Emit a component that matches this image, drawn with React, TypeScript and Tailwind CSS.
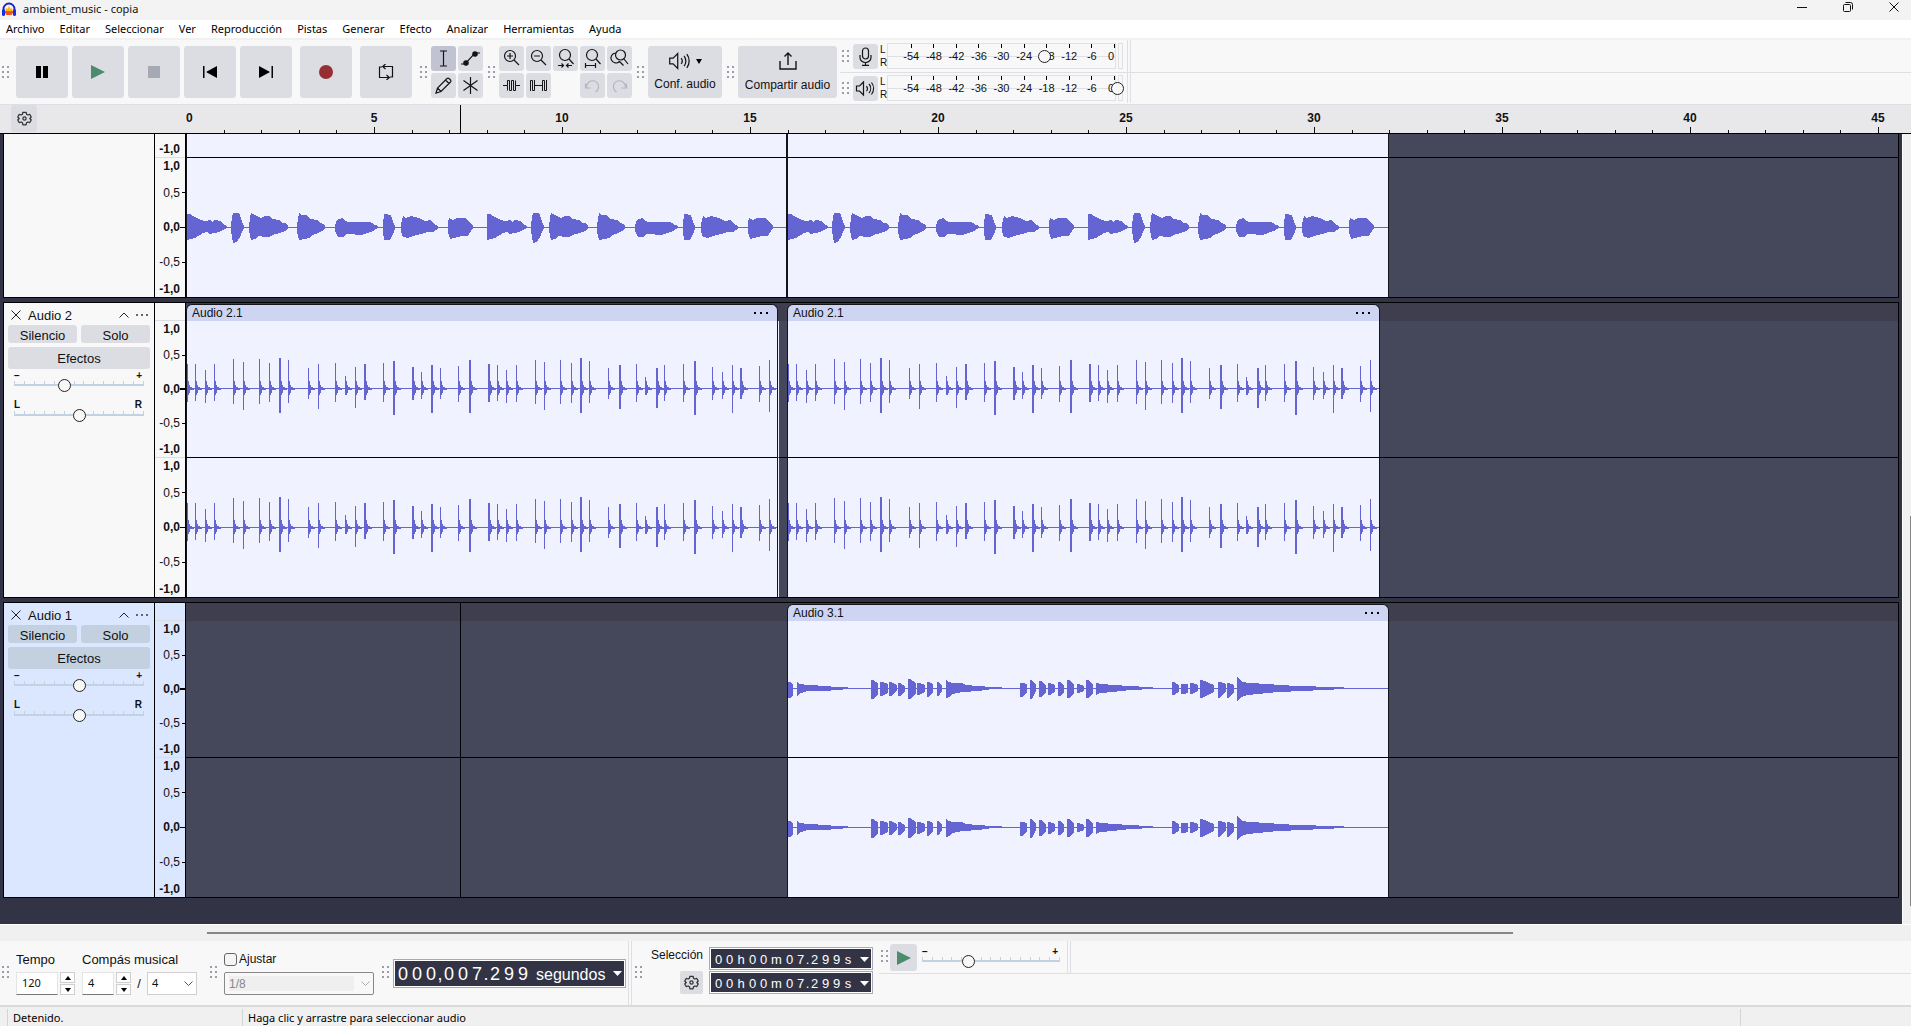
import React from 'react';

const MENU = ['Archivo', 'Editar', 'Seleccionar', 'Ver', 'Reproducción', 'Pistas', 'Generar', 'Efecto', 'Analizar', 'Herramientas', 'Ayuda'];

const SECONDS = [5, 10, 15, 20, 25, 30, 35, 40, 45];

const METER_MARKS = ['-54', '-48', '-42', '-36', '-30', '-24', '-18', '-12', '-6'];

// One bar of the pad sound, as outlines around the zero line
const PAD_NOTES = [
  '0,-13 3,-13 6,-11 10,-9 14,-7 18,-6 23,-7 25,-5 28,-7 33,-6 36,-3 40,-1 40,1 36,3 32,5 27,6 23,7 20,5 15,6 13,8 8,11 3,12 0,13',
  '44,-2 45,-10 46,-14 51,-14 53,-12 55,-5 57,-1 57,1 55,5 53,10 50,15 46,16 45,9 44,5',
  '62,-2 64,-15 65,-13 68,-12 74,-9 78,-11 82,-11 85,-8 92,-7 95,-4 99,-4 101,-1 101,2 98,4 93,6 88,7 82,10 79,10 71,9 68,12 64,13 62,4',
  '110,-2 112,-14 115,-12 120,-12 123,-8 130,-7 134,-4 136,-3 138,-1 138,1 135,4 131,6 126,8 122,11 117,12 112,13 110,5',
  '148,-2 150,-7 155,-9 158,-6 162,-5 182,-5 185,-4 188,-2 191,-1 191,1 186,4 180,6 175,8 160,7 156,10 151,10 148,4',
  '196,-3 197,-13 204,-12 206,-5 208,-1 208,2 206,7 203,13 197,13 196,4',
  '214,-3 216,-11 219,-9 224,-11 232,-9 238,-6 243,-7 247,-3 251,-1 251,1 249,3 246,5 240,5 234,7 226,9 221,11 216,10 214,5',
  '261,-4 262,-9 266,-7 270,-9 279,-9 281,-6 284,-3 286,-1 286,1 284,4 281,9 275,9 267,11 263,12 261,5',
];

// Drum hits: x, peak above zero, peak below zero, width
const HITS = [
  [0, 24, 14, 1], [8, 24, 13, 1], [18, 18, 15, 1], [27, 24, 13, 1], [46, 29, 16, 1], [56, 26, 22, 1],
  [72, 29, 16, 1], [82, 25, 14, 1], [92, 30, 25, 2], [101, 28, 15, 1], [121, 20, 11, 1], [131, 24, 21, 1],
  [148, 25, 14, 1], [158, 12, 7, 1], [168, 21, 20, 1], [177, 24, 12, 2], [196, 25, 14, 1], [206, 27, 27, 2],
  [225, 21, 12, 2], [234, 16, 11, 1], [244, 23, 25, 2], [253, 20, 11, 1], [271, 22, 14, 1], [282, 28, 25, 2],
  [301, 24, 14, 2], [310, 23, 13, 1], [319, 18, 15, 1], [329, 23, 14, 1], [348, 28, 16, 1], [357, 26, 22, 1],
  [373, 28, 16, 1], [384, 25, 15, 1], [393, 30, 25, 2], [402, 27, 15, 1], [421, 20, 11, 1], [432, 23, 21, 2],
  [449, 24, 14, 1], [458, 11, 7, 1], [469, 20, 20, 2], [477, 23, 13, 1], [496, 24, 14, 1], [507, 27, 27, 2],
  [525, 21, 12, 1], [535, 16, 11, 1], [545, 23, 25, 1], [553, 20, 11, 2], [572, 22, 14, 1], [582, 28, 24, 1],
];

// Plucked notes: start, end, then the heights above and below at each end
const PLUCKS = [
  [0, 5, 6, 4, 9, 7], [83, 90, 8, 5, 10, 6], [92, 100, 6, 4, 7, 5], [101, 109, 6, 3, 7, 3], [110, 117, 5, 2, 7, 3],
  [120, 128, 9, 5, 10, 5], [129, 137, 5, 3, 6, 4], [139, 145, 6, 4, 8, 4], [149, 154, 6, 2, 7, 3],
  [232, 239, 5, 4, 8, 4], [242, 248, 8, 3, 10, 3], [251, 258, 7, 3, 8, 4], [260, 267, 5, 3, 6, 4],
  [270, 276, 6, 3, 7, 4], [279, 286, 8, 4, 9, 5], [289, 296, 4, 2, 4, 3], [298, 305, 8, 4, 9, 5],
  [384, 391, 6, 3, 6, 4], [393, 400, 4, 4, 5, 5], [402, 410, 5, 3, 5, 3], [412, 426, 8, 3, 9, 4],
  [430, 438, 6, 4, 9, 3], [439, 446, 5, 3, 9, 4],
];

const PLUCK_TAILS = [
  '9,-6 12,-4 20,-3 24,-3 35,-2 50,-1 60,-1 60,1 50,2 35,3 20,3 13,5 11,6 9,8',
  '158,-9 160,-6 165,-5 174,-5 178,-3 190,-2 204,-1 214,-1 214,1 204,1 190,3 175,4 168,5 163,7 161,9 158,10',
  '308,-5 314,-4 325,-3 342,-2 360,-1 365,-1 365,1 342,2 325,4 312,5 308,7',
  '449,-11 451,-9 454,-6 462,-5 480,-4 492,-3 510,-2 545,-1 556,-1 556,1 515,3 490,4 470,6 460,7 453,9 451,12 449,13',
];

const PadWave: React.FC = () => (
  <>
    {[0, 300].map((start) => (
      <g key={start} transform={`translate(${start} 0)`}>
        {PAD_NOTES.map((points) => (
          <polygon key={points} points={points} />
        ))}
      </g>
    ))}
  </>
);

const DrumWave: React.FC = () => (
  <>
    {HITS.map(([x, up, down, w]) => (
      <g key={x}>
        <rect x={x} y={-up} width={w} height={up + down} />
        <rect x={x + w} y={-7} width={1} height={14} />
        <rect x={x + w + 1} y={-3} width={1} height={8} />
        <rect x={x + w + 2} y={-1} width={2} height={3} />
        <rect x={x + w + 4} y={0} width={2} height={2} />
      </g>
    ))}
  </>
);

const PluckWave: React.FC = () => (
  <>
    {PLUCKS.map(([a, b, t0, t1, b0, b1]) => (
      <polygon key={a} points={`${a},${-t0} ${a + 2},${-t0} ${b},${-t1} ${b},${b1} ${a + 2},${b0 + 1} ${a},${b0 + 1}`} />
    ))}
    {PLUCK_TAILS.map((points) => (
      <polygon key={points} points={points} />
    ))}
  </>
);

type WaveKind = 'pad' | 'drum' | 'pluck';

const Wave: React.FC<{ kind: WaveKind; zero: number }> = ({ kind, zero }) => (
  <svg className="block h-full w-full" fill="#6464d2" shapeRendering="crispEdges" aria-hidden="true">
    <g transform={`translate(0 ${zero})`}>
      <rect x={0} y={0} width={602} height={1} />
      {kind === 'pad' && <PadWave />}
      {kind === 'drum' && <DrumWave />}
      {kind === 'pluck' && <PluckWave />}
    </g>
  </svg>
);

const Grip: React.FC<{ className?: string }> = ({ className = '' }) => (
  <div className={`grid w-[7px] shrink-0 grid-cols-2 gap-x-[3px] gap-y-[3px] ${className}`}>
    {[0, 1, 2, 3, 4, 5].map((i) => (
      <span key={i} className="h-0.5 w-0.5 bg-[#9d9bb0]" />
    ))}
  </div>
);

const BigButton: React.FC<{ label: string; className?: string; children: React.ReactNode }> = ({ label, className = '', children }) => (
  <button aria-label={label} className={`flex h-[52px] w-[52px] items-center justify-center rounded-[3px] bg-[#dcdde3] ${className}`}>
    {children}
  </button>
);

const ToolButton: React.FC<{ label: string; active?: boolean; muted?: boolean; children: React.ReactNode }> = ({ label, active, muted, children }) => (
  <button
    aria-label={label}
    disabled={muted}
    className={`flex h-[25px] w-[25px] shrink-0 items-center justify-center rounded-[3px] ${active ? 'bg-[#c1c3d2]' : 'bg-[#dcdde3]'} ${muted ? 'text-[#b4b6bd]' : 'text-[#151515]'}`}
  >
    <svg width="21" height="21" viewBox="0 0 21 21" fill="none" stroke="currentColor" strokeWidth="1.2">
      {children}
    </svg>
  </button>
);

const GearIcon: React.FC = () => (
  <svg width="15" height="15" viewBox="0 0 24 24" fill="none" stroke="#333" strokeWidth="2" strokeLinejoin="round">
    <path d="M9.5 2h5l.8 3.2 2 1.2 3.2-.9 2.3 4.2-2.3 2.3 2.3 2.4-2.3 4.1-3.2-.9-2 1.2-.8 3.2h-5l-.8-3.2-2-1.2-3.2.9-2.3-4.1L3.5 12 1.2 9.7l2.3-4.2 3.2.9 2-1.2z" />
    <circle cx="12" cy="12" r="2.6" />
  </svg>
);

const MicIcon: React.FC = () => (
  <>
    <rect x="7.5" y="2" width="6" height="11" rx="3" />
    <path d="M5 9v2.5a5.5 5 0 0 0 11 0V9M10.5 16.5V19M7 19.300h7" />
  </>
);

const SpeakerIcon: React.FC = () => (
  <>
    <path d="M1.5 8v5h3l4 4V4l-4 4z" />
    <path d="M11.5 8a4 4 0 0 1 0 5M14 6a7 7 0 0 1 0 9M16.500 4.500a10 10 0 0 1 0 12" />
  </>
);

const THUMB =
  'appearance-none bg-transparent [&::-webkit-slider-thumb]:h-[13px] [&::-webkit-slider-thumb]:w-[13px] [&::-webkit-slider-thumb]:appearance-none [&::-webkit-slider-thumb]:rounded-full [&::-webkit-slider-thumb]:border [&::-webkit-slider-thumb]:border-solid [&::-webkit-slider-thumb]:border-[#222] [&::-webkit-slider-thumb]:bg-[#f8f8f8]';

const Slider: React.FC<{ label: string; value: number; ticks?: number }> = ({ label, value, ticks = 14 }) => (
  <div className="relative h-3">
    <div className="flex h-[5px] justify-between pt-0.5">
      {Array.from({ length: ticks }, (_, i) => (
        <span key={i} className="h-[3px] w-px bg-[#c3d2e2]" />
      ))}
    </div>
    <div className="h-0.5 bg-[#c3d2e2]" />
    <input type="range" aria-label={label} defaultValue={value} className={`absolute inset-0 m-0 h-full w-full ${THUMB}`} />
  </div>
);

const Meter: React.FC<{ label: string; value: number; icon: React.ReactNode }> = ({ label, value, icon }) => (
  <div className="flex w-[287px] items-center pl-0.5">
    <Grip />
    <div className="ml-1">
      <ToolButton label={label}>{icon}</ToolButton>
    </div>
    <div className="ml-0.5 flex w-[7px] flex-col text-[10px] leading-[13px]">
      <span>L</span>
      <span>R</span>
    </div>
    <div className="relative flex h-[26px] flex-1 border border-[#e0e0e4] pl-3 text-[11px]">
      <div className="absolute inset-x-0 top-3 h-px bg-[#e0e0e4]" />
      {METER_MARKS.map((mark) => (
        <div key={mark} className="relative flex flex-1 flex-col items-center">
          <span className="h-1 w-px bg-black" />
          <span className="leading-[16px]">{mark}</span>
        </div>
      ))}
      <div className="relative flex w-3 flex-col items-end">
        <span className="h-1 w-px bg-black" />
        <span className="pr-px leading-[16px]">0</span>
      </div>
      <input type="range" aria-label={`Nivel: ${label}`} defaultValue={value} className={`absolute inset-y-0 -left-1.5 h-full w-[calc(100%+15px)] ${THUMB}`} />
    </div>
    <div className="mr-1 ml-0.5 h-[26px] w-[5px] border border-[#e0e0e4]" />
  </div>
);

const ScaleLabels: React.FC<{ heavy?: boolean }> = ({ heavy }) => (
  <div className="flex h-full flex-col items-end text-xs leading-none">
    <div className="flex h-4 items-center pr-[5px] font-bold">1,0</div>
    <div className="flex flex-[9] items-center gap-0.5">
      0,5
      <span className="h-px w-[3px] bg-black" />
    </div>
    <div className="flex flex-[8] items-center font-bold">
      0,0
      <span className={heavy ? 'h-0.5 w-[5px] bg-black' : 'h-px w-[5px] bg-black'} />
    </div>
    <div className="flex flex-[9] items-center gap-0.5">
      -0,5
      <span className="h-px w-[3px] bg-black" />
    </div>
    <div className="flex h-4 items-center pr-[5px] font-bold">-1,0</div>
  </div>
);

const VerticalRuler: React.FC = () => (
  <div className="flex w-8 flex-col border-x border-black">
    <div className="h-[18px] border-b border-[#dcdde3]" />
    <div className="h-[137px] border-b border-[#dcdde3]">
      <ScaleLabels heavy />
    </div>
    <div className="h-[139px]">
      <ScaleLabels />
    </div>
  </div>
);

const Clip: React.FC<{ name: string; kind: WaveKind; className: string }> = ({ name, kind, className }) => (
  <div className={`flex shrink-0 flex-col bg-[#3e3e4f] ${className}`}>
    <div className="mt-px flex h-[17px] items-center justify-between rounded-t-md border border-b-0 border-[#15151c] bg-[#ced5f2] px-[5px] text-xs leading-none">
      <span>{name}</span>
      <button aria-label={`Opciones de ${name}`} className="flex gap-1 pr-1">
        <span className="h-0.5 w-0.5 bg-black" />
        <span className="h-0.5 w-0.5 bg-black" />
        <span className="h-0.5 w-0.5 bg-black" />
      </button>
    </div>
    <div className="h-[137px] border-x border-b border-x-[#15151c] border-b-black bg-[#f0f2ff]">
      <Wave kind={kind} zero={67} />
    </div>
    <div className="h-[139px] border-x border-[#15151c] bg-[#f0f2ff]">
      <Wave kind={kind} zero={69} />
    </div>
  </div>
);

const Gap: React.FC<{ className: string; lit?: boolean }> = ({ className, lit }) => {
  const edge = lit ? 'border-l border-l-[#f0f2ff]' : '';
  return (
    <div className={`flex flex-col ${className}`}>
      <div className="h-[18px] bg-[#3e3e4f]" />
      <div className={`h-[137px] border-b border-b-black bg-[#45475a] ${edge}`} />
      <div className={`h-[139px] bg-[#45475a] ${edge}`} />
    </div>
  );
};

const Track: React.FC<{ name: string; selected?: boolean; gain: number; children: React.ReactNode }> = ({ name, selected, gain, children }) => {
  const button = selected ? 'bg-[#c2d0df]' : 'bg-[#dcdde3]';
  return (
    <section className={`mt-1 flex border border-black ${selected ? 'bg-[#dbe6ff]' : 'bg-[#f8f8f8]'}`}>
      <div className="w-[150px] shrink-0 px-1 text-[13px] leading-none">
        <div className="flex h-[22px] items-center pt-0.5">
          <button aria-label={`Cerrar ${name}`} className="pl-[3px]">
            <svg width="10" height="10" viewBox="0 0 10 10" stroke="#222">
              <path d="M.5.5l9 9M9.500.5l-9 9" />
            </svg>
          </button>
          <span className="ml-[7px] flex-1">{name}</span>
          <button aria-label="Contraer">
            <svg width="10" height="6" viewBox="0 0 10 6" fill="none" stroke="#222">
              <path d="M.5 5.500l4.500-4.500 4.500 4.500" />
            </svg>
          </button>
          <button aria-label="Menú de pista" className="mr-0.5 ml-[7px] flex gap-[3px]">
            <span className="h-0.5 w-0.5 bg-[#666]" />
            <span className="h-0.5 w-0.5 bg-[#666]" />
            <span className="h-0.5 w-0.5 bg-[#666]" />
          </button>
        </div>
        <div className="flex gap-1">
          <button className={`h-[18px] flex-1 rounded-[3px] pt-0.5 ${button}`}>Silencio</button>
          <button className={`h-[18px] flex-1 rounded-[3px] pt-0.5 ${button}`}>Solo</button>
        </div>
        <button className={`mt-1 h-[22px] w-full rounded-[3px] ${button}`}>Efectos</button>
        <div className="px-1.5">
          <div className="flex h-2.5 justify-between pr-0.5 text-[10px] leading-[13px] font-bold">
            <span>−</span>
            <span>+</span>
          </div>
          <Slider label={`Ganancia de ${name}`} value={gain} />
          <div className="mt-2 flex h-2.5 justify-between pr-0.5 text-[10px] leading-[12px] font-bold">
            <span>L</span>
            <span>R</span>
          </div>
          <Slider label={`Panorama de ${name}`} value={50} />
        </div>
      </div>
      <VerticalRuler />
      <div className="relative flex min-w-0 flex-1 overflow-hidden">{children}</div>
    </section>
  );
};

// Tail of the first track, scrolled partly out of view
const ScrolledTrack: React.FC = () => (
  <section className="flex border-x border-b border-black bg-[#f8f8f8]">
    <div className="w-[150px] shrink-0" />
    <div className="flex w-8 shrink-0 flex-col border-x border-black text-xs leading-none">
      <div className="flex h-6 items-end justify-end border-b border-[#dcdde3] pr-[5px] pb-0.5 font-bold">-1,0</div>
      <div className="h-[139px]">
        <ScaleLabels />
      </div>
    </div>
    <div className="flex min-w-0 flex-1 overflow-hidden">
      {['w-[601px]', 'w-[602px]'].map((width) => (
        <div key={width} className={`shrink-0 border-x border-[#15151c] bg-[#f0f2ff] ${width}`}>
          <div className="h-6 border-b border-black" />
          <div className="h-[139px]">
            <Wave kind="pad" zero={69} />
          </div>
        </div>
      ))}
      <div className="flex-1 bg-[#45475a]">
        <div className="h-6 border-b border-black" />
      </div>
    </div>
  </section>
);

const Spin: React.FC<{ id: string; value: string; width: string }> = ({ id, value, width }) => (
  <div className="flex gap-0.5">
    <input id={id} defaultValue={value} className={`h-[23px] border border-[#e4e4e4] border-b-[#777] bg-white pb-0.5 pl-[5px] font-['Noto_Sans',sans-serif] text-[11px] ${width}`} />
    <div className="flex w-[15px] flex-col justify-between">
      <button aria-label="Subir" className="flex h-[11px] items-center justify-center border border-[#cfcfcf] bg-[#fdfdfd]">
        <svg width="6" height="4"><path d="M3 0l3 4H0z" /></svg>
      </button>
      <button aria-label="Bajar" className="flex h-[11px] items-center justify-center border border-[#cfcfcf] bg-[#fdfdfd]">
        <svg width="6" height="4"><path d="M3 4l3-4H0z" /></svg>
      </button>
    </div>
  </div>
);

const cellWidth = (c: string) => {
  if (c === '.') return 'w-[3px]';
  if (c === 'm') return 'w-[15px]';
  if (c === 'h' || c === 's') return 'w-3';
  return 'w-[11px]';
};

const SelectionTime: React.FC<{ label: string }> = ({ label }) => (
  <div role="group" aria-label={label} className="flex h-[23px] w-[164px] items-center border border-[#a9a9b3] bg-white p-px">
    <div className="flex h-full w-full items-center bg-[#323445] pt-px pl-0.5 text-[13px] leading-none text-white">
      {'00h00m07.299s'.split('').map((c, i) => (
        <span key={i} className={`flex justify-center ${cellWidth(c)}`}>{c}</span>
      ))}
      <button aria-label="Formato" className="mr-0.5 ml-auto">
        <svg width="9" height="5" className="block" fill="#fff"><path d="M0 0h9L4.500 5z" /></svg>
      </button>
    </div>
  </div>
);

const TitleBar: React.FC = () => (
  <header className="flex h-5 items-center bg-[#f3f3f3] font-['Noto_Sans',sans-serif] text-[11px]">
    <svg className="ml-px" width="16" height="16" viewBox="0 0 16 16">
      <path d="M2.500 10V7a5.500 5.500 0 0 1 11 0v3" fill="none" stroke="#1420c8" strokeWidth="1.800" />
      <path d="M4 10l1-4 1.500 1L8 4l1.500 3L11 6l1 4z" fill="#ffb700" />
      <path d="M4 9h8v2l-1.500 2h-5L4 11z" fill="#f4511e" />
      <rect x="1" y="7" width="3" height="7" rx="1.500" fill="#1a2be0" />
      <rect x="12" y="7" width="3" height="7" rx="1.500" fill="#1a2be0" />
    </svg>
    <span className="ml-1.5 flex-1 pb-0.5">ambient_music - copia</span>
    <div className="flex items-center gap-9 pr-3 pb-1.5">
      <button aria-label="Minimizar">
        <svg width="10" height="10"><path d="M0 5.500h10" stroke="#111" /></svg>
      </button>
      <button aria-label="Restaurar">
        <svg width="10" height="10" fill="none" stroke="#111">
          <rect x=".5" y="2.500" width="7" height="7" rx="1" />
          <path d="M2.500.5h5a2 2 0 0 1 2 2v5" />
        </svg>
      </button>
      <button aria-label="Cerrar">
        <svg width="10" height="10" stroke="#111"><path d="M.5.5l9 9M9.500.5l-9 9" /></svg>
      </button>
    </div>
  </header>
);

const TopToolbar: React.FC = () => (
  <div className="flex h-[65px] border-b border-[#dedfe4] bg-[#f8f8f8]">
    <div className="flex items-center pl-0.5">
      <Grip />
      <div className="ml-[7px] flex gap-1">
        <BigButton label="Pausa">
          <svg width="12" height="12"><path d="M0 0h5v12H0zM7 0h5v12H7z" /></svg>
        </BigButton>
        <BigButton label="Reproducir">
          <svg width="14" height="14" fill="#4c8b6b"><path d="M0 0l14 7-14 7z" /></svg>
        </BigButton>
        <BigButton label="Detener">
          <span className="h-3 w-3 bg-[#a5a9b3]" />
        </BigButton>
        <BigButton label="Ir al inicio">
          <svg width="14" height="12"><path d="M0 0h1.500v12H0zM14 0v12L3 6z" /></svg>
        </BigButton>
        <BigButton label="Ir al final">
          <svg width="14" height="12"><path d="M12.500 0H14v12h-1.500zM0 0v12l11-6z" /></svg>
        </BigButton>
        <BigButton label="Grabar" className="ml-1">
          <span className="h-3.5 w-3.5 rounded-full bg-[#962f33]" />
        </BigButton>
        <BigButton label="Bucle" className="ml-1">
          <svg width="16" height="16" fill="none" stroke="#111" strokeWidth="1.200">
            <path d="M4 3H1.500v10.500H11M8.500 11l2.800 2.500L8.500 16M12 13h2.500V2.500H5M7.500 0L4.700 2.500 7.500 5" />
          </svg>
        </BigButton>
      </div>
      <div className="ml-2 flex items-center gap-1">
        <Grip />
        <div className="grid grid-cols-2 gap-0.5">
          <ToolButton label="Selección" active>
            <path d="M7 3h3l.5.5.5-.5h3M10.500 3.500v14M7 18h3l.5-.5.5.5h3" />
          </ToolButton>
          <ToolButton label="Envolvente">
            <path d="M1 16h4l10-11h5" />
            <circle cx="6" cy="15" r="2.200" fill="currentColor" />
            <circle cx="15" cy="6" r="2.200" fill="currentColor" />
          </ToolButton>
          <ToolButton label="Dibujo">
            <path d="M3 18l1.500-5L14 3.500a1.500 1.500 0 0 1 2 0l1.500 1.500a1.500 1.500 0 0 1 0 2L8 16.500zM12.500 5l3.500 3.500M4.500 13L8 16.500" />
          </ToolButton>
          <ToolButton label="Multiherramienta">
            <path d="M10.500 2v17M3.500 5.500l14 10M17.500 5.500l-14 10" />
          </ToolButton>
        </div>
      </div>
      <div className="ml-[5px] flex items-center gap-1">
        <Grip />
        <div className="grid grid-cols-5 gap-0.5">
          <ToolButton label="Acercar">
            <circle cx="9" cy="8" r="5.500" />
            <path d="M13 12l5 5M9 5v6M6 8h6" />
          </ToolButton>
          <ToolButton label="Alejar">
            <circle cx="9" cy="8" r="5.500" />
            <path d="M13 12l5 5M6 8h6" />
          </ToolButton>
          <ToolButton label="Ajustar la selección">
            <circle cx="10" cy="7" r="5.500" />
            <path d="M14 11l4.500 5M3 17.500h5.500M6.500 15.500l2 2-2 2M17 17.500h-5.500M13.500 15.500l-2 2 2 2" />
          </ToolButton>
          <ToolButton label="Ajustar el proyecto">
            <circle cx="10" cy="7" r="5.500" />
            <path d="M14 11l4.500 5M4 17.500h10M3.500 15v5M13.500 15v5" />
          </ToolButton>
          <ToolButton label="Alternar zoom">
            <circle cx="11.500" cy="7" r="5" />
            <path d="M15 11l4 5M6.500 5A5 5 0 1 0 10.500 13.500M10.500 13.500l4 4" />
          </ToolButton>
          <ToolButton label="Recortar">
            <path strokeWidth="1" d="M2 10.500h4.500v-5h2v10h2v-10h2v10h2v-5H19M6.500 10.500v5M14.500 5.500v5" />
          </ToolButton>
          <ToolButton label="Silenciar">
            <path strokeWidth="1" d="M2.500 16V5.500h2v10h2V5M7 10.500h7M14.500 16V5.500h2v10h2V5" />
          </ToolButton>
          <span />
          <ToolButton label="Deshacer" muted>
            <path d="M3.500 8.500V13h5M4 12.500C5 7 9 5 12.500 6s5.500 5 3 9.500l-2 1.500" />
          </ToolButton>
          <ToolButton label="Rehacer" muted>
            <path d="M17.500 8.500V13h-5M17 12.500C16 7 12 5 8.500 6S3 11 5.500 15.500l2 1.500" />
          </ToolButton>
        </div>
      </div>
      <div className="ml-[5px] flex items-center gap-1">
        <Grip />
        <button className="flex h-[52px] w-[74px] flex-col items-center justify-between rounded-[3px] bg-[#dcdde3] pt-[3px] pb-1.5 text-xs">
          <span className="flex items-center gap-1">
            <svg width="24" height="24" viewBox="0 0 21 21" fill="none" stroke="#151515" strokeWidth="1.100">
              <SpeakerIcon />
            </svg>
            <svg width="6" height="5"><path d="M0 0h6L3 5z" /></svg>
          </span>
          <span className="leading-[16px]">Conf. audio</span>
        </button>
      </div>
      <div className="ml-[5px] flex items-center gap-1">
        <Grip />
        <button className="flex h-[52px] w-[99px] flex-col items-center justify-between rounded-[3px] bg-[#dcdde3] pt-1.5 pb-[5px] text-xs">
          <svg width="18" height="18" fill="none" stroke="#151515" strokeWidth="1.400">
            <path d="M1 9v8h16V9M9 13V1M5.500 4.500L9 1l3.500 3.500" />
          </svg>
          <span className="leading-[16px]">Compartir audio</span>
        </button>
      </div>
    </div>
    <div className="ml-[3px] flex flex-1 flex-col">
      <div className="flex h-[33px] border-b border-[#dedfe4]">
        <Meter label="Grabación" value={68} icon={<MicIcon />} />
        <div className="w-1 border-x border-[#dedfe4]" />
      </div>
      <div className="flex flex-1 pb-px">
        <Meter label="Reproducción" value={100} icon={<SpeakerIcon />} />
        <div className="w-1 border-x border-[#dedfe4]" />
      </div>
    </div>
  </div>
);

const TimeRuler: React.FC = () => (
  <div className="relative flex h-[29px] overflow-hidden border-b border-black bg-[#e8e8ea] text-xs font-bold">
    <div className="w-[186px] shrink-0 pl-[11px]">
      <button aria-label="Opciones de la línea de tiempo" className="flex h-[27px] w-[26px] items-center justify-center rounded-[3px] bg-[#dcdde3]">
        <GearIcon />
      </button>
    </div>
    <div className="flex w-[94px] shrink-0 flex-col justify-between">
      <span className="pt-1 leading-[18px]">0</span>
      <svg width="94" height="6" stroke="#111" shapeRendering="crispEdges">
        <path d="M38 3v3M75.500 3v3" />
      </svg>
    </div>
    {SECONDS.map((s) => (
      <div key={s} className="flex w-[188px] shrink-0 flex-col items-center justify-between">
        <span className="pt-1 leading-[18px]">{s}</span>
        <svg width="188" height="6" stroke="#111" shapeRendering="crispEdges">
          <path d="M19 3v3M56.500 3v3M94.500 0v6M132 3v3M169.500 3v3" />
        </svg>
      </div>
    ))}
    <div className="absolute inset-y-0 left-[460px] w-px bg-black" />
  </div>
);

const BottomToolbar: React.FC = () => (
  <div className="flex h-[64px] bg-[#f8f8f8] text-[13px]">
    <div className="flex items-start gap-[7px] pl-0.5">
      <Grip className="mt-[25px]" />
      <div className="pt-[11px]">
        <label htmlFor="tempo" className="mb-1 block h-4 leading-[16px]">Tempo</label>
        <Spin id="tempo" value="120" width="w-[42px]" />
      </div>
      <div className="pt-[11px]">
        <label htmlFor="beats" className="mb-1 block h-4 leading-[16px]">Compás musical</label>
        <div className="flex items-center">
          <Spin id="beats" value="4" width="w-8" />
          <span className="w-4 text-center">/</span>
          <div className="relative">
            <select aria-label="Figura" className="block h-[23px] w-[50px] appearance-none border border-[#d0d0d0] bg-white pl-1 font-['Noto_Sans',sans-serif] text-[11px]">
              <option>4</option>
            </select>
            <svg className="pointer-events-none absolute top-[9px] right-1" width="9" height="6" fill="none" stroke="#555"><path d="M.5.5l4 4 4-4" /></svg>
          </div>
        </div>
      </div>
      <Grip className="mt-[25px] ml-1.5" />
      <div className="pt-[9px]">
        <label className="mb-1 flex h-[18px] items-center gap-0.5 text-xs">
          <input type="checkbox" className="h-[13px] w-[13px] appearance-none rounded-[3px] border border-[#666] bg-[#f5f5f5]" />
          Ajustar
        </label>
        <div className="relative">
          <select disabled aria-label="Ajustar a" className="block h-[23px] w-[150px] appearance-none rounded-[2px] border border-[#888] bg-[linear-gradient(#efefef,#efefef)] bg-[length:125px_15px] bg-[position:4px_3px] bg-no-repeat pl-1 text-[12px] text-[#888] opacity-100">
            <option>1/8</option>
          </select>
          <svg className="pointer-events-none absolute top-[9px] right-1" width="9" height="6" fill="none" stroke="#aaa"><path d="M.5.5l4 4 4-4" /></svg>
        </div>
      </div>
      <Grip className="mt-[25px] ml-px" />
      <div role="group" aria-label="Tiempo" className="mt-[18px] -ml-[3px] h-[29px] w-[233px] border border-[#a9a9b3] bg-white p-px">
        <div className="flex h-full items-center bg-[#323445] pl-px text-lg leading-none text-white">
          {'000,007.299'.split('').map((c, i) => (
            <span key={i} className={`flex justify-center ${c === ',' || c === '.' ? 'w-1' : 'w-3.5'}`}>{c}</span>
          ))}
          <span className="ml-1.5 pt-0.5 text-base leading-none">segundos</span>
          <button aria-label="Formato de tiempo" className="mr-0.5 ml-auto">
            <svg width="9" height="5" className="block" fill="#fff"><path d="M0 0h9L4.500 5z" /></svg>
          </button>
        </div>
      </div>
    </div>
    <div className="ml-0.5 w-1 border-x border-[#dedfe4]" />
    <div className="flex items-start gap-[7px] pl-[3px]">
      <Grip className="mt-[25px]" />
      <div className="flex w-[54px] flex-col items-end pt-1.5">
        <span className="mb-2 h-4 text-xs leading-[16px]">Selección</span>
        <button aria-label="Opciones de selección" className="flex h-[23px] w-[23px] items-center justify-center rounded-[2px] bg-[#dcdde3]">
          <GearIcon />
        </button>
      </div>
      <div className="-ml-px flex flex-col gap-px pt-1.5">
        <SelectionTime label="Inicio de la selección" />
        <SelectionTime label="Fin de la selección" />
      </div>
    </div>
    <div className="ml-1.5 flex-1">
      <div className="flex h-[33px] border-b border-[#dedfe4]">
        <div className="flex w-[188px] items-start pt-[3px] pl-0.5">
          <Grip className="mt-1.5" />
          <button aria-label="Reproducir a velocidad" className="ml-0.5 flex h-[27px] w-[27px] items-center justify-center rounded-[3px] bg-[#dcdde3]">
            <svg width="14" height="14" fill="#4c8b6b"><path d="M0 0l14 7-14 7z" /></svg>
          </button>
          <div className="mr-[7px] ml-[5px] flex-1 pt-px">
            <div className="flex h-2.5 justify-between pr-0.5 text-[10px] leading-[14px] font-bold">
              <span>−</span>
              <span>+</span>
            </div>
            <Slider label="Velocidad de reproducción" value={32} ticks={15} />
          </div>
        </div>
        <div className="w-1 border-x border-[#dedfe4]" />
      </div>
    </div>
  </div>
);

const App: React.FC = () => {
  return (
    <div className="flex min-h-screen flex-col overflow-hidden bg-[#f0f0f0] font-['Liberation_Sans',Arial,sans-serif] text-[#111]">
      <TitleBar />

      {/* Menu */}
      <nav className="flex h-5 items-center gap-[15px] border-b-2 border-[#f1f1f1] bg-white px-1.5 pt-px font-['Noto_Sans',sans-serif] text-[11px] text-black">
        {MENU.map((item) => (
          <button key={item}>{item}</button>
        ))}
      </nav>

      <TopToolbar />
      <TimeRuler />

      {/* Tracks */}
      <main className="flex flex-1">
        <div className="min-w-0 flex-1 bg-[#323445] px-[3px]">
          <ScrolledTrack />
          <Track name="Audio 2" gain={38}>
            <Clip name="Audio 2.1" kind="drum" className="w-[592px]" />
            <Gap className="w-[9px] shrink-0" lit />
            <Clip name="Audio 2.1" kind="drum" className="w-[593px]" />
            <Gap className="flex-1" />
          </Track>
          <Track name="Audio 1" selected gain={50}>
            <Gap className="w-[601px] shrink-0" />
            <Clip name="Audio 3.1" kind="pluck" className="w-[602px]" />
            <Gap className="flex-1" />
            <div className="absolute inset-y-0 left-[274px] w-px bg-black" />
          </Track>
        </div>
        <div className="flex w-[9px] flex-col items-end border-l border-white">
          <div className="mt-[382px] h-[390px] w-px bg-[#888]" />
        </div>
      </main>
      <div className="h-[17px] border-t border-white pt-[7px] pr-[398px] pl-[207px]">
        <div className="h-0.5 bg-[#868686]" />
      </div>

      <BottomToolbar />

      <footer className="flex h-[21px] border-t-2 border-[#dadada] bg-[#f0f0f0] pt-0.5 font-['Noto_Sans',sans-serif] text-[11px] leading-[17px] text-black">
        <div className="w-2 border-r border-[#d4d4d4]" />
        <div className="w-[235px] border-r border-[#d4d4d4] pl-[5px]">Detenido.</div>
        <div className="flex-1 pl-[5px]">Haga clic y arrastre para seleccionar audio</div>
        <div className="w-[171px] border-l border-[#d4d4d4]" />
      </footer>
    </div>
  );
};

export default App;
